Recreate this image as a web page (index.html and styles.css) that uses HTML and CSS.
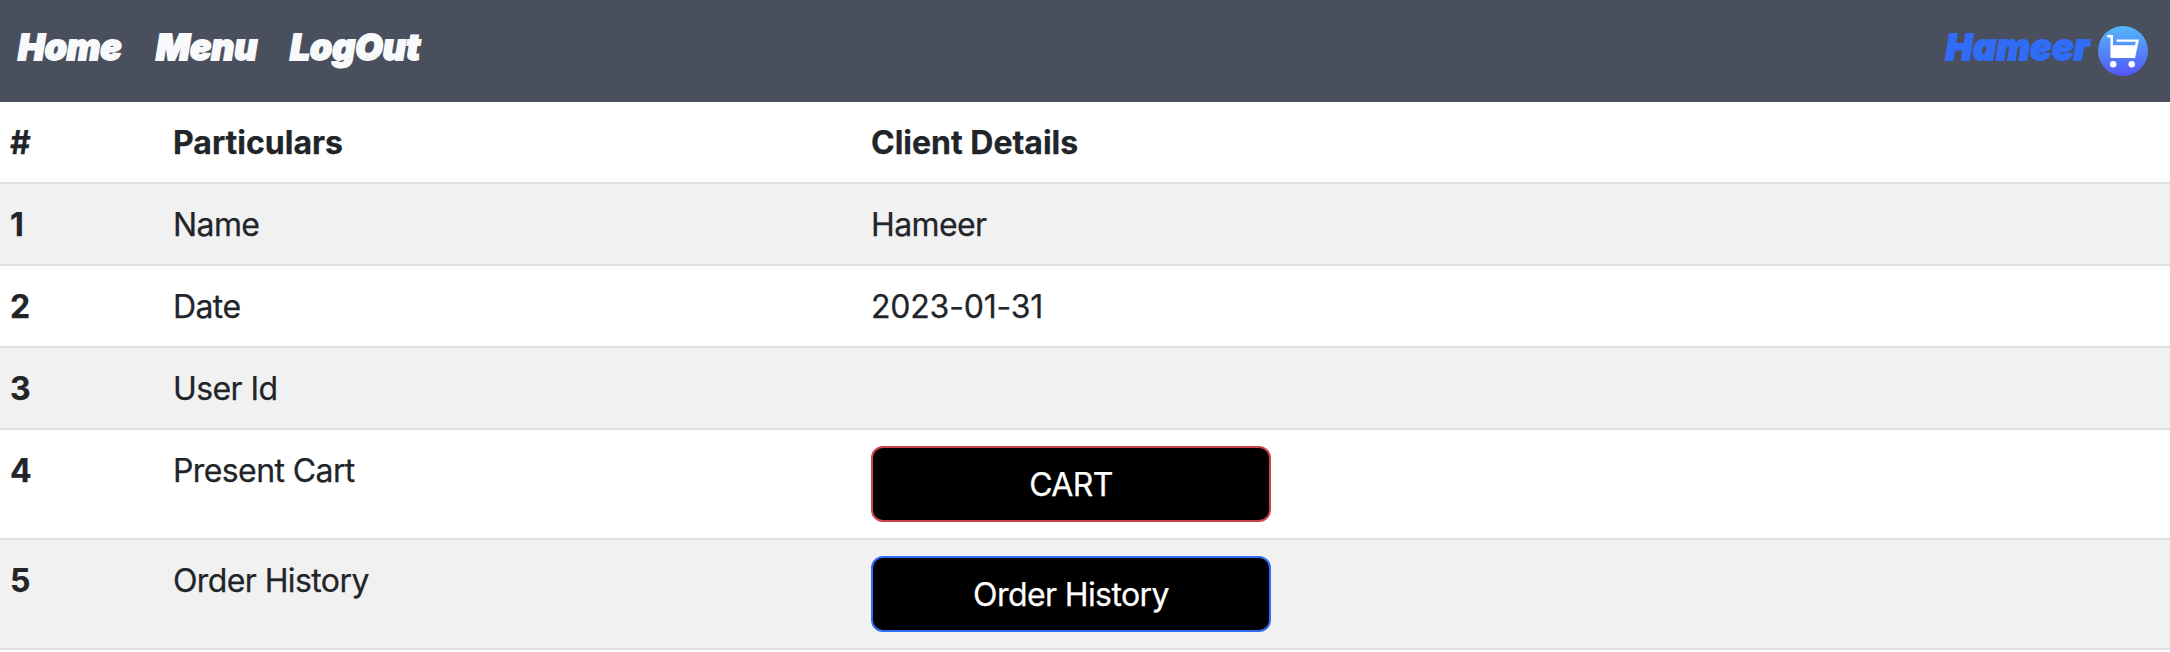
FILE: index.html
```html
<!DOCTYPE html>
<html lang="en">
<head>
<meta charset="utf-8">
<title>Client Details</title>
<link rel="stylesheet" href="styles.css">
</head>
<body>
<nav class="navbar">
  <div class="nav-links">
    <a class="nav-link home">Home</a>
    <a class="nav-link menu">Menu</a>
    <a class="nav-link logout">LogOut</a>
  </div>
  <div class="account">
    <a class="nav-link user">Hameer</a>
    <svg class="cart-icon" viewBox="0 0 50 50">
      <defs><linearGradient id="g" x1="0" y1="0" x2="0" y2="1"><stop offset="0" stop-color="#54b7fa"/><stop offset="1" stop-color="#5456f5"/></linearGradient></defs>
      <circle cx="25" cy="25" r="25" fill="url(#g)"/>
      <path d="M9.2 9H15V19.2H37L37.8 15.8H18.6V13.4H41L37 32H12.4V11.4H9.2Z" fill="#fff"/>
      <circle cx="15.2" cy="38.2" r="3.2" fill="#fff"/>
      <circle cx="33.7" cy="38.2" r="3.2" fill="#fff"/>
    </svg>
  </div>
</nav>
<table class="details">
  <colgroup><col class="col-num"><col class="col-label"><col></colgroup>
  <thead>
    <tr><th>#</th><th>Particulars</th><th>Client Details</th></tr>
  </thead>
  <tbody>
    <tr><th>1</th><td>Name</td><td>Hameer</td></tr>
    <tr><th>2</th><td>Date</td><td class="date">2023-01-31</td></tr>
    <tr><th>3</th><td>User Id</td><td></td></tr>
    <tr><th>4</th><td>Present Cart</td><td class="action"><button class="btn btn-cart">CART</button></td></tr>
    <tr><th>5</th><td>Order History</td><td class="action"><button class="btn btn-history">Order History</button></td></tr>
  </tbody>
</table>
</body>
</html>
```
FILE: styles.css
```css
* { box-sizing: border-box; }
body {
  margin: 0;
  background: #fff;
  color: #212529;
  font: 400 32px/48px Inter, "Liberation Sans", sans-serif;
}
.navbar {
  display: flex;
  justify-content: space-between;
  align-items: center;
  height: 102px;
  padding: 0 22px 0 18px;
  background: #494f5d;
}
.nav-links { display: flex; }
.nav-link {
  padding-bottom: 6px;
  color: #f8f9fa;
  font: italic 900 35.5px/48px Inter, sans-serif;
  letter-spacing: 0;
  -webkit-text-stroke: 1.8px currentColor;
  white-space: nowrap;
}
.home { width: 138px; }
.menu { width: 134px; }
.account { display: flex; align-items: center; gap: 8px; }
.user { color: #306cf6; letter-spacing: 0.5px; }
.cart-icon { width: 50px; height: 50px; }
.details {
  width: 100%;
  table-layout: fixed;
  border-collapse: separate;
  border-spacing: 0;
}
.col-num { width: 163px; }
.col-label { width: 698px; }
.details th, .details td {
  height: 82px;
  padding: 17px 10px 15px;
  border-bottom: 2px solid #dee2e6;
  text-align: left;
  vertical-align: top;
  letter-spacing: -0.6px;
  -webkit-text-stroke: 0.25px currentColor;
}
.details th { font-weight: 700; letter-spacing: 0; }
.details .date { letter-spacing: -0.2px; }
.details .action { padding-top: 16px; padding-bottom: 16px; }
.details tbody tr:nth-child(odd) > * { background: #f1f1f1; }
.btn {
  display: block;
  width: 400px;
  height: 76px;
  padding: 2px 0 0;
  border: 2px solid;
  border-radius: 12px;
  background: #000;
  color: #fff;
  font: inherit;
  letter-spacing: inherit;
}
.btn-cart { border-color: #cb444a; }
.btn-history { border-color: #306cf6; }
```
